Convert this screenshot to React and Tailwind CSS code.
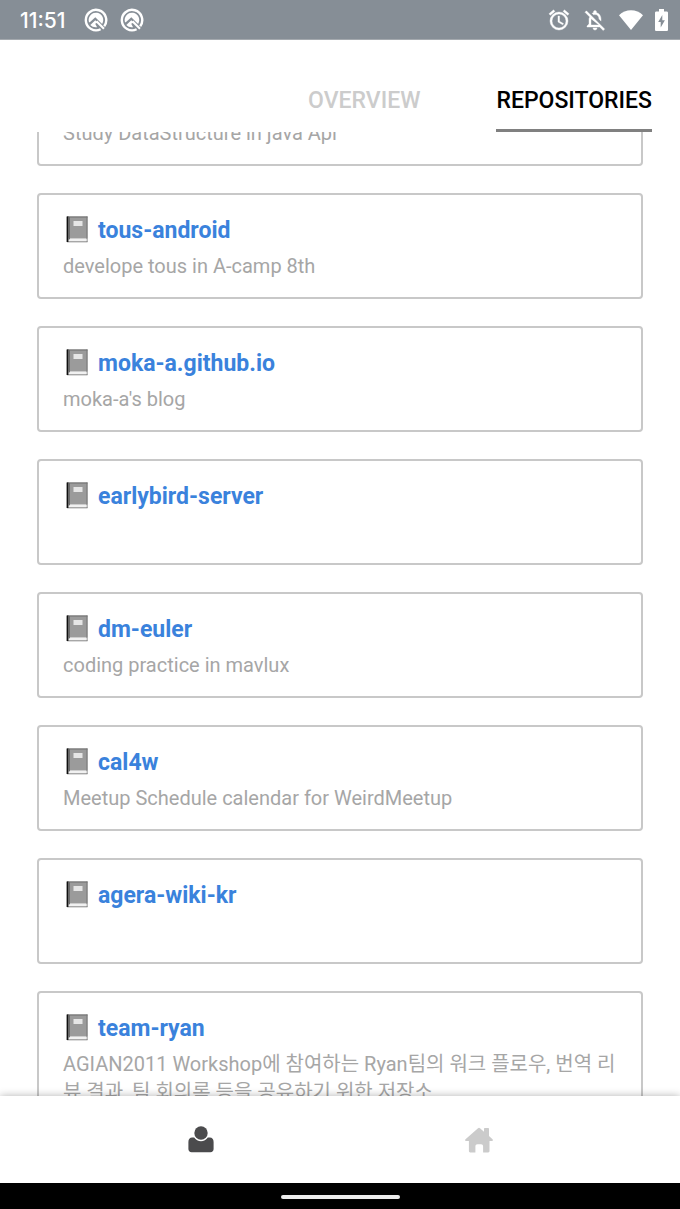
import { useLayoutEffect, useRef, useState } from "react";

const repositories = [
  { name: "java-datastructure", description: "Study DataStructure in java Api" },
  { name: "tous-android", description: "develope tous in A-camp 8th" },
  { name: "moka-a.github.io", description: "moka-a's blog" },
  { name: "earlybird-server", description: "" },
  { name: "dm-euler", description: "coding practice in mavlux" },
  { name: "cal4w", description: "Meetup Schedule calendar for WeirdMeetup" },
  { name: "agera-wiki-kr", description: "" },
  {
    name: "team-ryan",
    description:
      "AGIAN2011 Workshop에 참여하는 Ryan팀의 워크 플로우, 번역 리뷰 결과, 팀 회의록 등을 공유하기 위한 저장소",
  },
];

const INITIAL_SCROLL = 72;

function QIcon() {
  return (
    <svg viewBox="0 0 24 24" className="size-6" fill="none" aria-hidden="true">
      <path d="M16.600 21.200A10.200 10.200 0 1 1 20.200 18.200" stroke="#fff" strokeWidth="2.400" />
      <path d="M4.800 13.500a7.300 7.300 0 1 1 13.300 2.400L11.300 9.200 5.500 14.600z" fill="#fff" />
      <path d="M6.300 17 11.300 12.200l2.300 2.300-2.400 1.300 1.900 3.400a7.300 7.300 0 0 1-6.800-2.200z" fill="#fff" />
      <path d="m12.500 13.300 7.500 7.500" stroke="#fff" strokeWidth="2.200" />
    </svg>
  );
}

function AlarmIcon() {
  return (
    <svg viewBox="0 0 24 24" className="size-6" fill="#fff" aria-hidden="true">
      <path d="m22 5.720-4.600-3.860-1.290 1.530 4.600 3.860L22 5.720zM7.880 3.390 6.600 1.860 2 5.710l1.290 1.530 4.590-3.850zM12.500 8H11v6l4.750 2.850.75-1.230-4-2.370V8zM12 4a9 9 0 1 0 0 18 9 9 0 0 0 0-18zm0 16a7 7 0 1 1 0-14 7 7 0 0 1 0 14z" stroke="#fff" strokeWidth=".4" />
    </svg>
  );
}

function BellOffIcon() {
  return (
    <svg viewBox="0 0 24 24" className="size-6" fill="#fff" aria-hidden="true">
      <path d="M12 22c1.100 0 2-.9 2-2h-4c0 1.100.9 2 2 2zm0-15.500c2.490 0 4 2.020 4 4.500v.1l2 2V11c0-3.070-1.630-5.640-4.500-6.320V4a1.500 1.500 0 0 0-3 0v.68c-.51.12-.99.32-1.450.56L10.600 6.790c.44-.19.91-.29 1.400-.29zM3.410 2.860 2 4.270l4.810 4.810C6.290 9.650 6 10.310 6 11v5l-2 2v1h12.730l3.510 3.510 1.410-1.410L3.410 2.860zM16 17H8v-6c0-.12.010-.24.020-.36L16 17z" stroke="#fff" strokeWidth=".4" />
    </svg>
  );
}

function WifiIcon() {
  return (
    <svg viewBox="0 0 24 20" className="h-5 w-6" fill="#fff" aria-hidden="true">
      <path d="M12 20 0 5.200C3.300 2 7.500.2 12 .2S20.700 2 24 5.200z" />
    </svg>
  );
}

function BatteryIcon() {
  return (
    <svg viewBox="0 0 13 22" className="h-[22px] w-[13px]" aria-hidden="true">
      <path d="M4 0h5v2.500h2.700c.7 0 1.300.6 1.300 1.300v16.900c0 .7-.6 1.300-1.300 1.300H1.300C.6 22 0 21.400 0 20.700V3.800c0-.7.6-1.300 1.300-1.300H4z" fill="#fff" />
      <path d="M7.300 6 3.200 13h2.500v5.500L9.900 11.200H7.300z" fill="#868e96" />
    </svg>
  );
}

function BookIcon() {
  return (
    <svg viewBox="0 0 22 27" className="h-[27px] w-[22px] shrink-0" aria-hidden="true">
      <path d="M1 .5h20.500v22H1z" fill="#9b9b9b" />
      <path d="M1 .5h20.500v1H1z" fill="#6d6d6d" />
      <path d="M20.500.5h1v25.500h-1z" fill="#777" />
      <path d="M2 23h18.500v2.500H2z" fill="#f1f1f1" />
      <path d="M1 25.300h20.500v1H1z" fill="#858585" />
      <path d="M.6.500h1.800v25.500H.6z" fill="#111" />
      <path d="M2.400 1h1.600v22l-1.600.9z" fill="#6a6a6a" />
      <path d="M7.500 5h9v5h-9z" fill="#e6e6e6" />
    </svg>
  );
}

function PersonIcon() {
  return (
    <svg viewBox="0 0 26 27" className="h-[27px] w-[26px]" fill="#4b4b4d" aria-hidden="true">
      <circle cx="13" cy="7" r="6.700" />
      <path d="M6.200 11.600A8.200 8.200 0 0 0 19.800 11.600H21.800c2.400 0 3.800 1.800 3.800 4.300V23c0 2-1.200 3.200-3.200 3.200H3.600C1.600 26.200.4 25 .4 23v-7.100c0-2.500 1.400-4.300 3.800-4.300z" />
    </svg>
  );
}

function HomeIcon() {
  return (
    <svg viewBox="0 0 28 26" className="h-[26px] w-7" fill="#cbcbcb" aria-hidden="true">
      <path d="M13 1.200a1.500 1.500 0 0 1 2 0l4 3.500V2.100c0-.6.4-1 1-1h3c.6 0 1 .4 1 1v7l3.500 3.100c.8.8.3 1.900-.7 1.900H24.500v10c0 .8-.5 1.300-1.300 1.300h-5.100v-5.900c0-1.500-.8-2.300-2.100-2.300h-3.500c-1.300 0-2.100.8-2.100 2.300v5.900H5.200c-.8 0-1.300-.5-1.300-1.300v-10H1.200c-1 0-1.500-1.100-.7-1.900z" />
    </svg>
  );
}

function StatusBar() {
  return (
    <div className="flex h-10 shrink-0 items-center justify-between border-b border-[#a4a9ae] bg-[#868e96] pl-5 pr-3">
      <div className="flex items-center gap-3">
        <span className="w-[52px] pt-0.5 font-[Inter,sans-serif] text-[21px] font-medium leading-6 text-white">11:51</span>
        <QIcon />
        <QIcon />
      </div>
      <div className="flex items-center gap-3">
        <AlarmIcon />
        <BellOffIcon />
        <WifiIcon />
        <BatteryIcon />
      </div>
    </div>
  );
}

function Tab({ label, selected, onSelect }) {
  return (
    <button
      type="button"
      role="tab"
      aria-selected={selected}
      onClick={onSelect}
      className={`flex h-full items-center border-b-[3px] pt-8 text-[23px] font-medium leading-7 ${
        selected ? "border-[#808080] text-black" : "border-transparent text-[#cccccc]"
      }`}
    >
      {label}
    </button>
  );
}

function RepositoryCard({ name, description }) {
  return (
    <li className="min-h-[106px] shrink-0 rounded border-2 border-[#c8c8c8] px-6 pt-[21px] pb-4">
      <h2 className="flex items-start gap-[10px] pl-[3px] text-[23px] font-bold leading-[30px] text-[#3a82dc]">
        <BookIcon />
        <a href={`#${name}`}>{name}</a>
      </h2>
      <p className="mt-1.5 text-[20px] leading-7 text-[#a6a6a6]">{description}</p>
    </li>
  );
}

export default function App() {
  const [tab, setTab] = useState("REPOSITORIES");
  const listRef = useRef(null);

  useLayoutEffect(() => {
    listRef.current.scrollTop = INITIAL_SCROLL;
  }, []);

  return (
    <div className="flex h-screen flex-col bg-white font-[Roboto,'Noto_Sans_CJK_KR',sans-serif]">
      <StatusBar />
      <header role="tablist" className="flex h-[92px] shrink-0 justify-end gap-[76px] pr-7">
        {["OVERVIEW", "REPOSITORIES"].map((label) => (
          <Tab key={label} label={label} selected={tab === label} onSelect={() => setTab(label)} />
        ))}
      </header>
      <main ref={listRef} className="min-h-0 flex-1 overflow-y-auto [scrollbar-width:none]">
        <ul className="flex flex-col gap-[27px] px-[37px] pb-7">
          {repositories.map((repo) => (
            <RepositoryCard key={repo.name} {...repo} />
          ))}
        </ul>
      </main>
      <nav className="z-10 flex h-[87px] shrink-0 items-center bg-white px-[62px] shadow-[0_0_8px_rgba(0,0,0,0.3)]">
        <button type="button" aria-label="Profile" className="flex flex-1 justify-center">
          <PersonIcon />
        </button>
        <button type="button" aria-label="Home" className="flex flex-1 justify-center">
          <HomeIcon />
        </button>
      </nav>
      <div className="z-10 flex h-[26px] shrink-0 items-center justify-center bg-black pt-0.5">
        <div className="h-1 w-[119px] rounded-full bg-[#ececec]" />
      </div>
    </div>
  );
}
